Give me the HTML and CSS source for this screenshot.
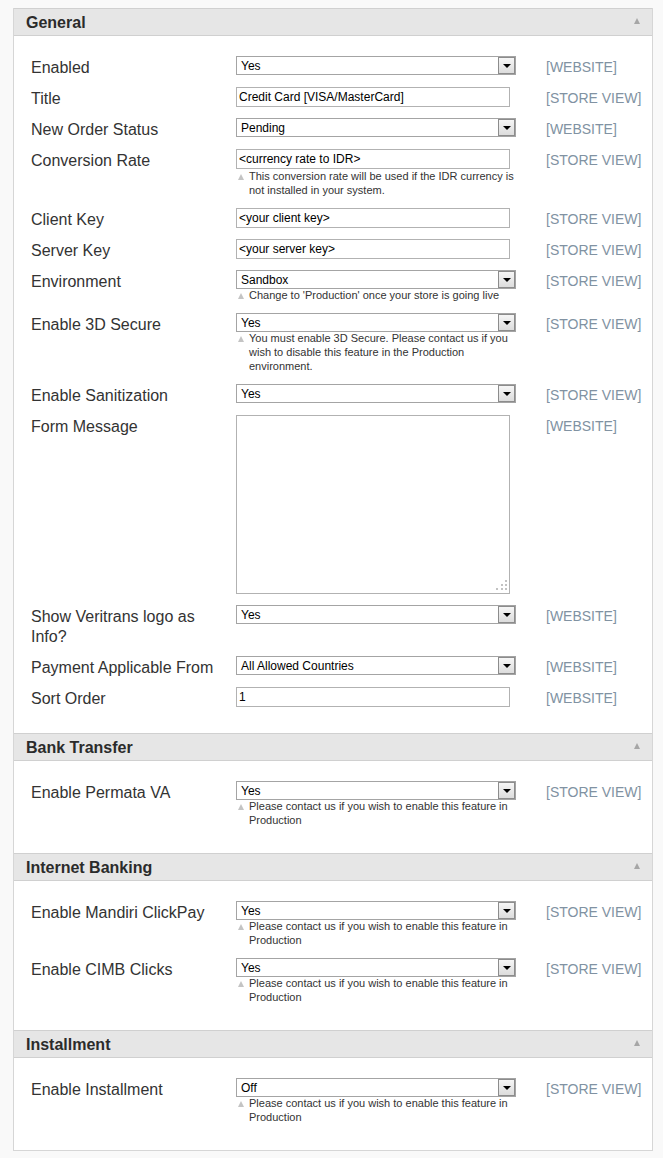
FILE: index.html
```html
<!DOCTYPE html>
<html>
<head>
<meta charset="utf-8">
<link rel="stylesheet" href="styles.css">
</head>
<body>
<div class="panel">
  <div class="head"><span class="title">General</span><i class="collapse"></i></div>
  <div class="body">
    <div class="row"><div class="label">Enabled</div><div class="value"><div class="select"><span>Yes</span><i class="btn"></i></div></div><div class="scope">[WEBSITE]</div></div>
    <div class="row"><div class="label">Title</div><div class="value"><input class="text" type="text" value="Credit Card [VISA/MasterCard]"></div><div class="scope">[STORE VIEW]</div></div>
    <div class="row"><div class="label">New Order Status</div><div class="value"><div class="select"><span>Pending</span><i class="btn"></i></div></div><div class="scope">[WEBSITE]</div></div>
    <div class="row"><div class="label">Conversion Rate</div><div class="value"><input class="text" type="text" value="&lt;currency rate to IDR&gt;"><p class="note">This conversion rate will be used if the IDR currency is not installed in your system.</p></div><div class="scope">[STORE VIEW]</div></div>
    <div class="row"><div class="label">Client Key</div><div class="value"><input class="text" type="text" value="&lt;your client key&gt;"></div><div class="scope">[STORE VIEW]</div></div>
    <div class="row"><div class="label">Server Key</div><div class="value"><input class="text" type="text" value="&lt;your server key&gt;"></div><div class="scope">[STORE VIEW]</div></div>
    <div class="row"><div class="label">Environment</div><div class="value"><div class="select"><span>Sandbox</span><i class="btn"></i></div><p class="note">Change to 'Production' once your store is going live</p></div><div class="scope">[STORE VIEW]</div></div>
    <div class="row"><div class="label">Enable 3D Secure</div><div class="value"><div class="select"><span>Yes</span><i class="btn"></i></div><p class="note">You must enable 3D Secure. Please contact us if you wish to disable this feature in the Production environment.</p></div><div class="scope">[STORE VIEW]</div></div>
    <div class="row"><div class="label">Enable Sanitization</div><div class="value"><div class="select"><span>Yes</span><i class="btn"></i></div></div><div class="scope">[STORE VIEW]</div></div>
    <div class="row"><div class="label">Form Message</div><div class="value"><div class="area"><textarea class="textarea"></textarea><i class="grip"><b class="d1"></b><b class="d2"></b><b class="d3"></b><b class="d4"></b><b class="d5"></b><b class="d6"></b></i></div></div><div class="scope">[WEBSITE]</div></div>
    <div class="row"><div class="label">Show Veritrans logo as Info?</div><div class="value"><div class="select"><span>Yes</span><i class="btn"></i></div></div><div class="scope">[WEBSITE]</div></div>
    <div class="row"><div class="label">Payment Applicable From</div><div class="value"><div class="select"><span>All Allowed Countries</span><i class="btn"></i></div></div><div class="scope">[WEBSITE]</div></div>
    <div class="row"><div class="label">Sort Order</div><div class="value"><input class="text" type="text" value="1"></div><div class="scope">[WEBSITE]</div></div>
  </div>

  <div class="head"><span class="title">Bank Transfer</span><i class="collapse"></i></div>
  <div class="body">
    <div class="row"><div class="label">Enable Permata VA</div><div class="value"><div class="select"><span>Yes</span><i class="btn"></i></div><p class="note">Please contact us if you wish to enable this feature in Production</p></div><div class="scope">[STORE VIEW]</div></div>
  </div>

  <div class="head"><span class="title">Internet Banking</span><i class="collapse"></i></div>
  <div class="body">
    <div class="row"><div class="label">Enable Mandiri ClickPay</div><div class="value"><div class="select"><span>Yes</span><i class="btn"></i></div><p class="note">Please contact us if you wish to enable this feature in Production</p></div><div class="scope">[STORE VIEW]</div></div>
    <div class="row"><div class="label">Enable CIMB Clicks</div><div class="value"><div class="select"><span>Yes</span><i class="btn"></i></div><p class="note">Please contact us if you wish to enable this feature in Production</p></div><div class="scope">[STORE VIEW]</div></div>
  </div>

  <div class="head"><span class="title">Installment</span><i class="collapse"></i></div>
  <div class="body">
    <div class="row"><div class="label">Enable Installment</div><div class="value"><div class="select"><span>Off</span><i class="btn"></i></div><p class="note">Please contact us if you wish to enable this feature in Production</p></div><div class="scope">[STORE VIEW]</div></div>
  </div>
</div>
</body>
</html>
```
FILE: styles.css
```css
html, body {
  margin: 0;
  padding: 0;
  background: #f9f9f9;
  font-family: "Liberation Sans", Arial, sans-serif;
  color: #333;
}
.panel {
  margin: 8px 0 0 13px;
  width: 638px;
  border: 1px solid #d6d6d6;
  border-top: 0;
  background: #fff;
}
.head {
  height: 26px;
  border-top: 1px solid #d0d0d0;
  border-bottom: 1px solid #d0d0d0;
  background: #e6e6e6;
  display: flex;
  align-items: center;
  justify-content: space-between;
  padding: 0 12px 0 12px;
}
.title {
  font-weight: bold;
  font-size: 16px;
  color: #2b2b2b;
  padding-top: 1px;
}
.collapse {
  width: 0;
  height: 0;
  border-left: 3.5px solid transparent;
  border-right: 3.5px solid transparent;
  border-bottom: 6px solid #a6a6a6;
  margin-top: -2px;
}
.body {
  padding: 14px 0 21px 17px;
}
.row {
  display: flex;
  align-items: flex-start;
  padding: 6px 0 5px;
}
.label {
  width: 188px;
  padding-right: 17px;
  padding-top: 2px;
  margin-bottom: -2px;
  font-size: 16px;
  line-height: 20px;
  color: #333;
}
.value {
  width: 280px;
}
.scope {
  margin-left: 30px;
  padding-top: 1px;
  margin-bottom: -1px;
  font-size: 14px;
  line-height: 20px;
  color: #8192a2;
  white-space: nowrap;
}
.select {
  box-sizing: border-box;
  height: 19px;
  width: 280px;
  border: 1px solid #a4a4a4;
  display: flex;
  align-items: center;
  justify-content: space-between;
  font-size: 12px;
  color: #000;
  padding-left: 4px;
  background: #fff;
}
.btn {
  box-sizing: border-box;
  width: 17px;
  height: 17px;
  border: 1px solid #8c8c8c;
  background: linear-gradient(#f6f6f6, #dcdcdc);
  display: flex;
  align-items: center;
  justify-content: center;
}
.btn::after {
  content: "";
  width: 0;
  height: 0;
  border-left: 4px solid transparent;
  border-right: 4px solid transparent;
  border-top: 4px solid #000;
  margin-top: 1px;
}
.text {
  box-sizing: border-box;
  display: block;
  width: 274px;
  height: 20px;
  margin: 0;
  border: 1px solid #b2b2b2;
  padding: 0 2px;
  font-family: "Liberation Sans", Arial, sans-serif;
  font-size: 12px;
  color: #000;
  outline: none;
}
.note {
  margin: -1px 0 0;
  position: relative;
  padding-left: 13px;
  font-size: 11px;
  line-height: 14px;
  color: #333;
}
.text + .note {
  margin-top: 0;
}
.note::before {
  content: "";
  position: absolute;
  left: 2px;
  top: 5px;
  width: 0;
  height: 0;
  border-left: 3.5px solid transparent;
  border-right: 3.5px solid transparent;
  border-bottom: 6px solid #c4c4c4;
}
.area {
  position: relative;
  width: 274px;
  height: 179px;
}
.textarea {
  box-sizing: border-box;
  display: block;
  width: 274px;
  height: 179px;
  margin: 0;
  border: 1px solid #b2b2b2;
  resize: none;
  outline: none;
}
.grip {
  position: absolute;
  right: 3px;
  bottom: 3px;
  width: 11px;
  height: 11px;
}
.grip b {
  position: absolute;
  width: 2px;
  height: 2px;
  background: #c2c2c2;
}
.grip .d1 { right: 0; top: 0; }
.grip .d2 { right: 0; top: 4px; }
.grip .d3 { right: 4px; top: 4px; }
.grip .d4 { right: 0; top: 8px; }
.grip .d5 { right: 4px; top: 8px; }
.grip .d6 { right: 9px; top: 8px; }
```
